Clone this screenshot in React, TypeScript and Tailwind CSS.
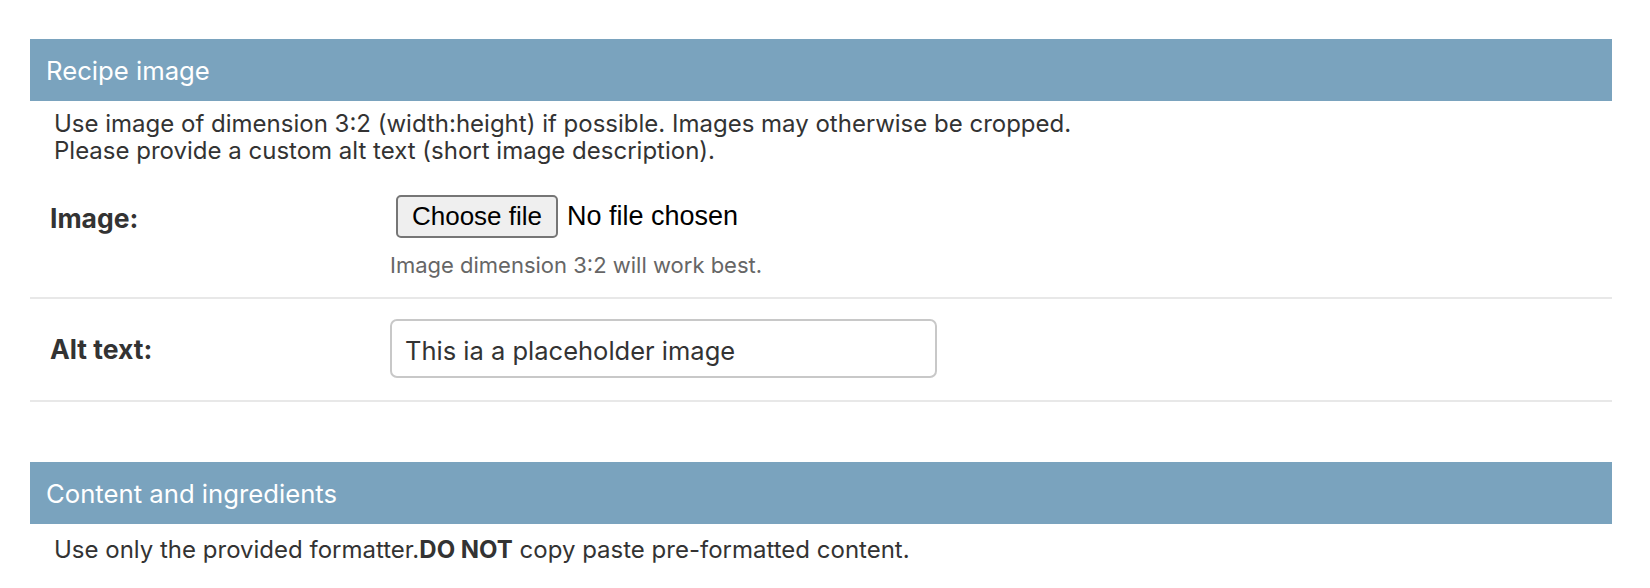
export default function App() {
  return (
    <div className="min-h-screen bg-white pt-[39px] pl-[30px] font-['Inter',sans-serif] text-[#333]">
      <div className="w-[1582px]">
        <section>
          <h2 className="flex h-[62px] items-center bg-[#7aa3be] pt-[2px] pl-[16px] text-[25.7px] font-normal text-white">
            Recipe image
          </h2>
          <div className="mt-[9px] pl-[24px] text-[24px] leading-[27px]">
            <p>Use image of dimension 3:2 (width:height) if possible. Images may otherwise be cropped.</p>
            <p>Please provide a custom alt text (short image description).</p>
          </div>

          <div className="flex border-b-2 border-[#e8e8e8] pt-[31px] pb-[20px] pl-[20px]">
            <label className="w-[340px] pt-[2px] text-[26.5px] leading-[43px] font-bold">Image:</label>
            <div className="flex flex-col">
              <div className="ml-[6px] flex items-center gap-[9px] font-['Liberation_Sans',sans-serif] text-black">
                <button className="flex h-[43px] w-[162px] items-center justify-center rounded-[5px] border-2 border-[#767676] bg-[#efefef] text-[26px]">
                  Choose file
                </button>
                <span className="text-[27px]">No file chosen</span>
              </div>
              <p className="mt-[16px] text-[22px] leading-[23px] text-[#666]">
                Image dimension 3:2 will work best.
              </p>
            </div>
          </div>

          <div className="flex border-b-2 border-[#e8e8e8] pt-[20px] pb-[21px] pl-[20px]">
            <label className="w-[340px] pt-[1px] text-[26.5px] leading-[59px] font-bold">Alt text:</label>
            <input
              type="text"
              defaultValue="This ia a placeholder image"
              className="h-[59px] w-[547px] rounded-[7px] border-2 border-[#c8c8c8] pt-[3px] pl-[13px] text-[25.5px] text-[#333] outline-none"
            />
          </div>
        </section>

        <section className="mt-[60px]">
          <h2 className="flex h-[62px] items-center bg-[#7aa3be] pt-[2px] pl-[16px] text-[25.7px] font-normal text-white">
            Content and ingredients
          </h2>
          <div className="mt-[12px] pl-[24px] text-[24px] leading-[27px]">
            <p>
              Use only the provided formatter.<strong>DO NOT</strong> copy paste pre-formatted content.
            </p>
          </div>
        </section>
      </div>
    </div>
  );
}
